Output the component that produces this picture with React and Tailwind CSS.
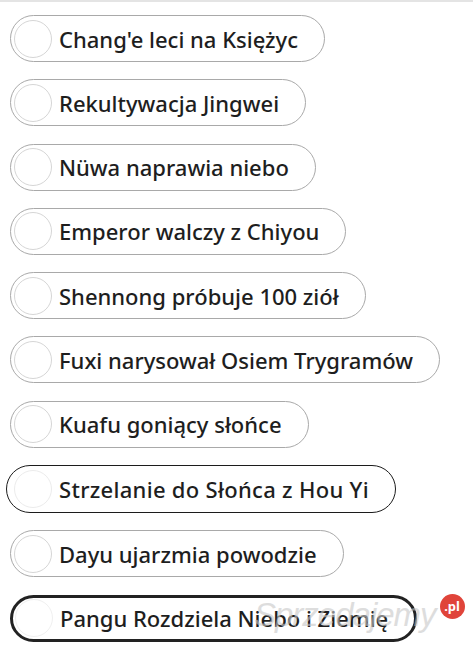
import React from "react";

const items = [
  { t: "Chang'e leci na Księżyc", v: "light" },
  { t: "Rekultywacja Jingwei", v: "light" },
  { t: "Nüwa naprawia niebo", v: "light" },
  { t: "Emperor walczy z Chiyou", v: "light" },
  { t: "Shennong próbuje 100 ziół", v: "light" },
  { t: "Fuxi narysował Osiem Trygramów", v: "light" },
  { t: "Kuafu goniący słońce", v: "light" },
  { t: "Strzelanie do Słońca z Hou Yi", v: "dark" },
  { t: "Dayu ujarzmia powodzie", v: "light" },
  { t: "Pangu Rozdziela Niebo i Ziemię", v: "bold" },
];

function Pill({ t, v }) {
  const border =
    v === "light"
      ? "border-[1.5px] border-[#a9a9a9] ml-[10px]"
      : v === "dark"
      ? "border-[1.5px] border-[#1c1c1c] ml-[6px]"
      : "border-[3px] border-[#222222] ml-[10px]";
  const circle =
    v === "light"
      ? "ml-[3px] border-[#d6d6d6]"
      : v === "dark"
      ? "ml-[7px] border-[#ececec]"
      : "ml-[2px] border-[#f0f0f0]";
  const text = v === "dark" ? "text-[22px] tracking-[0.3px]" : "text-[22px]";
  return (
    <div
      className={`flex items-center self-start rounded-full bg-white pr-[26px] ${
        v === "dark" ? "h-[48px]" : "h-[47px]"
      } ${border}`}
    >
      <div className={`w-[38px] h-[38px] rounded-full border shrink-0 ${circle}`} />
      <span
        className={`ml-[7px] leading-none text-[#1e1e1e] font-medium whitespace-nowrap ${text}`}
      >
        {t}
      </span>
    </div>
  );
}

export default function App() {
  return (
    <div
      className="relative w-[473px] h-[649px] bg-white overflow-hidden border-t-[2px] border-[#e4e4e4]"
      style={{ fontFamily: '"Noto Sans", "Open Sans", sans-serif' }}
    >
      <div className="flex flex-col gap-[17.3px] pt-[13px]">
        {items.map((it, i) => (
          <Pill key={i} {...it} />
        ))}
      </div>
      <div className="absolute left-[254px] top-[596px] flex items-start pointer-events-none">
        <span
          className="text-[33px] leading-none text-[#c8c8c8] opacity-60 italic tracking-[-1px]"
          style={{ fontFamily: '"Liberation Sans", sans-serif' }}
        >
          Sprzedajemy
        </span>
        <span className="ml-[4px] -mt-[4px] w-[25px] h-[25px] rounded-full bg-[#e0443a] text-white text-[13px] font-bold flex items-center justify-center leading-none">
          .pl
        </span>
      </div>
    </div>
  );
}
